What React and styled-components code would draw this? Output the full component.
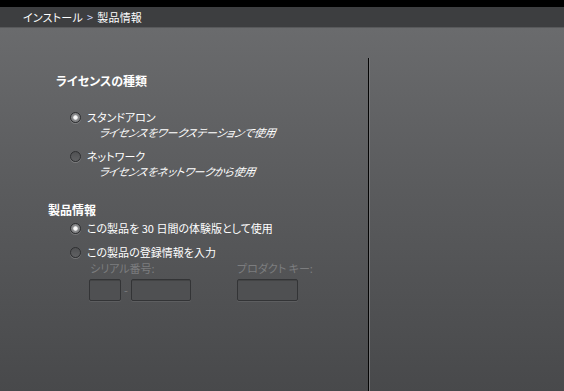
import styled, { createGlobalStyle } from 'styled-components';

const GlobalStyle = createGlobalStyle`
  html, body {
    margin: 0;
    padding: 0;
    height: 100%;
    background: #000;
  }
  #root {
    height: 100%;
  }
  * {
    box-sizing: border-box;
  }
`

const Window = styled.div`
  display: flex;
  flex-direction: column;
  height: 391px;
  width: 564px;
  overflow: hidden;
  font-family: "Noto Sans CJK JP", "Noto Sans", sans-serif;
  font-size: 11px;
  font-feature-settings: "palt";
  color: #fff;
  border-top: 7px solid #000;
`

const Breadcrumb = styled.div`
  height: 21px;
  flex-shrink: 0;
  display: flex;
  align-items: center;
  padding-left: 23px;
  background: #3d3e40;
  border-bottom: 1px solid #58595b;
  font-size: 11px;
  letter-spacing: 0.2px;

  .sep {
    margin: 0 4px;
    color: #cfd8ff;
  }
`

const Body = styled.div`
  flex: 1;
  display: flex;
  padding-top: 30px;
  background: linear-gradient(to bottom, #6a6b6d 0%, #5a5b5d 45%, #48494b 100%);
`

const LeftPanel = styled.div`
  width: 369px;
  flex-shrink: 0;
  border-right: 1px solid #050505;
  box-shadow: 1px 0 0 #77787a;
  padding-top: 15px;
`

const SectionTitle = styled.div`
  font-weight: bold;
  font-size: 12px;
  line-height: 16px;
  margin-left: ${p => p.$indent}px;
  margin-bottom: ${p => p.$gap}px;
`

const Option = styled.label`
  display: grid;
  grid-template-columns: 17px auto;
  align-items: center;
  margin-left: 70px;
  margin-bottom: ${p => p.$gap || 0}px;
  line-height: 15px;
`

const Radio = styled.span`
  width: 11px;
  height: 11px;
  border-radius: 50%;
  border: 1px solid #2e2f31;
  background: ${p => p.$checked
    ? 'radial-gradient(circle, #ffffff 0, #f4f4f4 1.8px, #8c8d8f 2.6px, #6e6f71 100%)'
    : 'linear-gradient(to bottom, #505153, #606163)'};
  box-shadow: 0 1px 0 rgba(255, 255, 255, 0.18);
`

const Hint = styled.div`
  grid-column: 2;
  font-style: italic;
  padding-left: 12px;
  transform: skewX(-10deg);
  transform-origin: left;
  letter-spacing: -0.2px;
`

const Fields = styled.div`
  display: flex;
  gap: 46px;
  margin-left: 89px;
  margin-top: 1px;
`

const Field = styled.div`
  display: flex;
  flex-direction: column;
  gap: 3px;
`

const FieldLabel = styled.div`
  color: #7c7d7f;
  line-height: 15px;
  padding-left: ${p => p.$pad || 0}px;
`

const InputRow = styled.div`
  display: flex;
  align-items: center;
`

const Box = styled.div`
  width: ${p => p.$w}px;
  height: 22px;
  border: 1px solid #333436;
  border-radius: 2px;
  background: #4f5052;
  box-shadow: inset 0 1px 0 rgba(0, 0, 0, 0.15), 0 1px 0 rgba(255, 255, 255, 0.08);
`

const Dash = styled.span`
  color: #7c7d7f;
  width: 10px;
  text-align: center;
`

const RightPanel = styled.div`
  flex: 1;
`

const App = () => {
  return (
    <>
      <GlobalStyle/>
      <Window>
        <Breadcrumb>
          インストール<span className="sep">&gt;</span>製品情報
        </Breadcrumb>
        <Body>
          <LeftPanel>
            <SectionTitle $indent={56} $gap={21}>ライセンスの種類</SectionTitle>

            <Option $gap={9}>
              <Radio $checked/>
              <span>スタンドアロン</span>
              <Hint>ライセンスをワークステーションで使用</Hint>
            </Option>
            <Option $gap={23}>
              <Radio/>
              <span>ネットワーク</span>
              <Hint>ライセンスをネットワークから使用</Hint>
            </Option>

            <SectionTitle $indent={48} $gap={3}>製品情報</SectionTitle>

            <Option $gap={9}>
              <Radio $checked/>
              <span>この製品を 30 日間の体験版として使用</span>
            </Option>
            <Option>
              <Radio/>
              <span>この製品の登録情報を入力</span>
            </Option>

            <Fields>
              <Field>
                <FieldLabel $pad={1}>シリアル番号:</FieldLabel>
                <InputRow>
                  <Box $w={32}/>
                  <Dash>-</Dash>
                  <Box $w={60}/>
                </InputRow>
              </Field>
              <Field>
                <FieldLabel>プロダクト キー:</FieldLabel>
                <InputRow>
                  <Box $w={61}/>
                </InputRow>
              </Field>
            </Fields>
          </LeftPanel>
          <RightPanel/>
        </Body>
      </Window>
    </>
  );
}

export default App;
